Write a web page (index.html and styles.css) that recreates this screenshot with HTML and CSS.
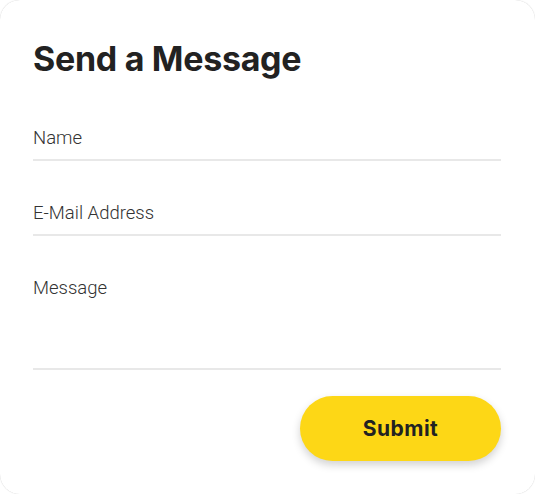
FILE: index.html
```html
<!DOCTYPE html>
<html lang="en">
<head>
<meta charset="utf-8">
<title>Send a Message</title>
<link rel="stylesheet" href="styles.css">
</head>
<body>
<div class="card">
  <h1 class="title">Send a Message</h1>
  <form class="form">
    <div class="field">
      <label class="label">Name</label>
    </div>
    <div class="field">
      <label class="label">E-Mail Address</label>
    </div>
    <div class="field field-message">
      <label class="label">Message</label>
    </div>
    <div class="actions">
      <button type="button" class="submit">Submit</button>
    </div>
  </form>
</div>
</body>
</html>
```
FILE: styles.css
```css
html, body {
  margin: 0;
  padding: 0;
  background: #ffffff;
}
.card {
  box-sizing: border-box;
  width: 535px;
  height: 494px;
  border-radius: 20px;
  box-shadow: 0 0 1px rgba(0,0,0,0.25);
  background: #ffffff;
  padding: 39px 34px 0 33px;
}
.title {
  margin: 0;
  font-family: Inter, "Open Sans", sans-serif;
  font-weight: 700;
  font-size: 34px;
  line-height: 40px;
  color: #222222;
  letter-spacing: -0.3px;
}
.form {
  margin-top: 49px;
  display: flex;
  flex-direction: column;
}
.field {
  border-bottom: 2px solid #e8e8e8;
  padding-bottom: 11px;
}
.field + .field {
  margin-top: 42px;
}
.field-message {
  padding-bottom: 70px;
}
.label {
  display: block;
  font-family: Roboto, "Liberation Sans", sans-serif;
  font-weight: 300;
  font-size: 18.5px;
  line-height: 20px;
  color: #333333;
}
.actions {
  display: flex;
  justify-content: flex-end;
  margin-top: 26px;
}
.submit {
  width: 201px;
  height: 65px;
  border: none;
  border-radius: 33px;
  background: #fdd716;
  box-shadow: 0 4px 8px rgba(0,0,0,0.18);
  font-family: Inter, "Open Sans", sans-serif;
  font-weight: 700;
  font-size: 21px;
  color: #222222;
  letter-spacing: 0.5px;
  cursor: pointer;
}
```
